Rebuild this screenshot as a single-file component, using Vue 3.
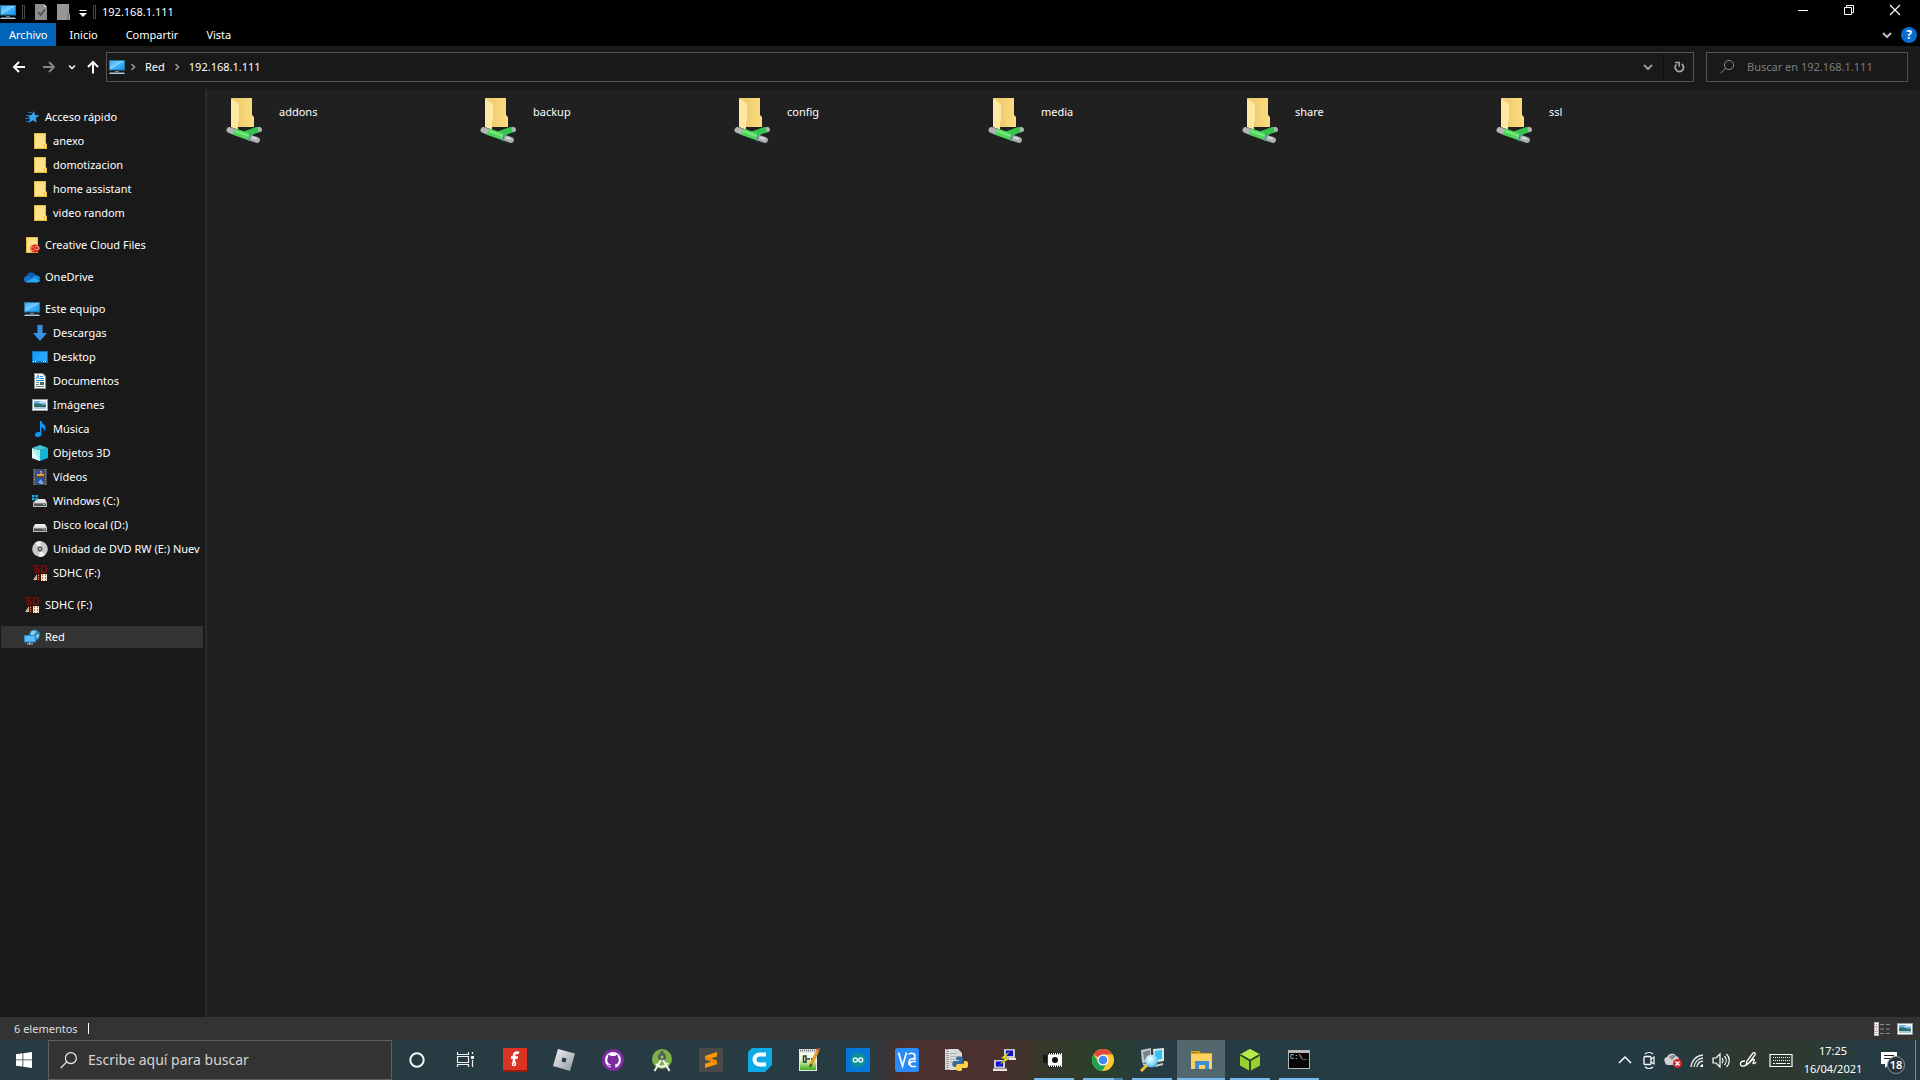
<template>
    <div class="desktop">
        <!-- icon sprite -->
        <svg class="sprite" aria-hidden="true">
            <defs>
                <linearGradient id="gScreen" x1="0" y1="0" x2="1" y2="1">
                    <stop offset="0" stop-color="#3ba7f0" /><stop offset=".5" stop-color="#7fd0ff" /><stop offset=".52" stop-color="#3fb2fb" /><stop offset="1" stop-color="#1a98ee" />
                </linearGradient>
                <linearGradient id="gFolder" x1="0" y1="0" x2="1" y2="0">
                    <stop offset="0" stop-color="#e9c766" /><stop offset="1" stop-color="#fedc83" />
                </linearGradient>
                <linearGradient id="gSilver" x1="0" y1="0" x2="1" y2="1">
                    <stop offset="0" stop-color="#f4f5f7" /><stop offset="1" stop-color="#8f979f" />
                </linearGradient>
                <linearGradient id="gGreen" x1="0" y1="0" x2="0" y2="1">
                    <stop offset="0" stop-color="#fdfff8" /><stop offset=".4" stop-color="#e6f8c4" /><stop offset="1" stop-color="#3fae18" />
                </linearGradient>
                <radialGradient id="gLens" cx=".4" cy=".35" r=".7">
                    <stop offset="0" stop-color="#f5ffff" /><stop offset=".6" stop-color="#8edcf8" /><stop offset="1" stop-color="#3d9fd6" />
                </radialGradient>
            </defs>
            <symbol id="i-pc" viewBox="0 0 16 16">
                <path d="M0 1h16v10.500H0z" fill="#28759e" /><path d="M1 2h14v8.500H1z" fill="url(#gScreen)" />
                <path d="M6 12h4v1H6z" fill="#6c7d88" /><path d="M1 13.500h14l1 1.500H0z" fill="#b5c6d2" />
            </symbol>
            <symbol id="i-star" viewBox="0 0 16 16">
                <path d="M10 2l.9 4 4.600.2-3.700 2.800.8 4.500-3.900-2.300-4.200 3 1.600-4.700L3.500 6.300l4-.3z" fill="#35a7f2" />
                <path d="M4 3.500h4M2 6.500h4M1 9.500h5M2 12.500h4" stroke="#1b72b8" />
            </symbol>
            <symbol id="i-dir" viewBox="0 0 16 16">
                <path d="M2 0h12v10l1 1v5H2z" fill="#e7bb3a" /><path d="M3 1h10v10h-1v4H3z" fill="#ffe18b" /><path d="M13 11h1v4h-1z" fill="#ffe9a8" />
            </symbol>
            <symbol id="i-cc" viewBox="0 0 16 16">
                <path d="M2 0h12v16H2z" fill="#e7bb3a" /><path d="M3 1h10v14H3z" fill="#ffe18b" />
                <ellipse cx="11" cy="11.500" rx="5" ry="4" fill="#da2312" />
                <path d="M10 13.500H8.500a1.800 1.800 0 0 1 0-3.600c1.500 0 2 1.600 3.500 3h1a1.800 1.800 0 0 0 0-3.700c-1 0-1.300.4-1.800.9" fill="none" stroke="#ffd1b5" stroke-width=".8" />
            </symbol>
            <symbol id="i-onedrive" viewBox="0 0 16 16">
                <path d="M2.500 8.200A5 5 0 0 1 12 6.300L9 9z" fill="#0b5cab" /><path d="M0 10.300a3.300 3.300 0 0 1 4.600-3.200L11 11l-8 2.500a3.200 3.200 0 0 1-3-3.200z" fill="#1173cc" />
                <path d="M8.500 8.500a4 4 0 0 1 4.500-2 3.600 3.600 0 0 1 3 3.700L10 11z" fill="#158ce0" /><path d="M2 13l7-4.200L16 11a2.800 2.800 0 0 1-2.700 2.500H3.400z" fill="#29aaf0" />
            </symbol>
            <symbol id="i-down" viewBox="0 0 16 16"><path d="M5.500 0h5v8H15l-7 8-7-8h4.500z" fill="#3592e5" /></symbol>
            <symbol id="i-desk" viewBox="0 0 16 16">
                <path d="M0 2h16v12H0z" fill="#0c73bf" /><path d="M1 3h14v9H1z" fill="#149dfb" /><path d="M9 3h6v9H2z" fill="#32adff" opacity=".6" />
                <path d="M1 12.500h1M3 12.500h1M11 12.500h1M13 12.500h1" stroke="#fff" />
            </symbol>
            <symbol id="i-doc" viewBox="0 0 16 16">
                <path d="M2 0h9l3 3v13H2z" fill="#8f8f8f" /><path d="M3 1h7.500L13 3.500V15H3z" fill="#fafafa" />
                <path d="M4 6l2-4 1 4M8 3.500h3M8 5.500h4M4 7.500h8" stroke="#1f86d6" fill="none" /><path d="M4 9.500h3M4 11.500h3M4 13.500h8" stroke="#6f7f8b" /><path d="M8 9h4v3H8z" fill="#35715c" />
            </symbol>
            <symbol id="i-img" viewBox="0 0 16 16">
                <path d="M0 2h16v12H0z" fill="#9c9c9c" /><path d="M1 3h14v10H1z" fill="#fff" /><path d="M2 4h12v8H2z" fill="#69b4ea" />
                <path d="M2 7c3-2 6 1 12 1v2H2z" fill="#2f6d5c" /><path d="M2 10h12v2H2z" fill="#9fc9de" /><path d="M7 6h7V4H9z" fill="#c9e3f5" />
            </symbol>
            <symbol id="i-music" viewBox="0 0 16 16"><path d="M8 0h1.500c.3 3 4 3.600 4 7 0 2-1 3-1.500 3.600.5-2.600-.6-3.600-2.500-4.300V13c0 1.800-1.500 3-3.600 3-1.700 0-2.900-.8-2.900-2.200 0-2 2.200-3.200 5-2.600z" fill="#0c9afa" /></symbol>
            <symbol id="i-3d" viewBox="0 0 16 16">
                <path d="M0 3l8 2v11l-8-3z" fill="#a8eef0" /><path d="M16 3L8 5v11l8-3z" fill="#13b5d6" /><path d="M8 0l8 3-8 2-8-2z" fill="#43c9d4" /><path d="M0 3l8 13-8-3z" fill="#dcfbf8" />
            </symbol>
            <symbol id="i-video" viewBox="0 0 16 16">
                <path d="M1 0h14v16H1z" fill="#4b4b4b" /><path d="M2.500 0v16M13.500 0v16" stroke="#a0a0a0" stroke-dasharray="1 1.500" />
                <path d="M4 1h8v6H4z" fill="#2a50a8" /><path d="M4 9h8v6H4z" fill="#2a50a8" /><path d="M5 5h3V2h2v3h2v2H5z" fill="#e4a02c" /><path d="M6 13l3-3 3 5H8z" fill="#65a9ed" /><path d="M8 3h1v1H8zM5 12h2v1H5z" fill="#c7332d" />
            </symbol>
            <symbol id="i-disk" viewBox="0 0 16 16">
                <path d="M3 7h10l2 4H1z" fill="#e9e9e9" /><path d="M1 10.500h14V15H1z" fill="#bcbcbc" /><path d="M2 11.500h12V14H2z" fill="#535353" /><path d="M11 12h2v1h-2z" fill="#48e04e" />
            </symbol>
            <symbol id="i-win" viewBox="0 0 16 16">
                <path d="M5 6h8l2 4H1z" fill="#e9e9e9" /><path d="M1 9.500h14V14H1z" fill="#bcbcbc" /><path d="M2 10.500h12V13H2z" fill="#535353" /><path d="M11 11h2v1h-2z" fill="#48e04e" />
                <path d="M0 2h2.500v2.300H0zM3.300 2H6v2.300H3.300zM0 5h2.500v2.300H0zM3.300 5H6v2.300H3.300z" fill="#18aef2" />
            </symbol>
            <symbol id="i-dvd" viewBox="0 0 16 16">
                <circle cx="8" cy="8" r="7.800" fill="#c9c9c9" /><path d="M8 8L3 2a8 8 0 0 1 6-2zM8 8l5 6a8 8 0 0 1-6 2z" fill="#f2f2f2" />
                <circle cx="8" cy="8" r="3" fill="#9b9b9b" /><circle cx="8" cy="8" r="2" fill="#3a3a3a" /><circle cx="8" cy="8" r=".9" fill="#eee" />
            </symbol>
            <symbol id="i-sd" viewBox="0 0 16 16">
                <path d="M1 15l4-6v6z" fill="#c6b8a2" /><path d="M5 9h3v7H5z" fill="#7d0507" /><path d="M6.500 10v5" stroke="#d6936a" stroke-dasharray="1 1" />
                <path d="M9 9h6v7H9z" fill="#f4ece0" /><path d="M10.500 9v7M13.500 9v7" stroke="#e3681b" stroke-dasharray="2 1" />
            </symbol>
            <symbol id="i-red" viewBox="0 0 16 16">
                <circle cx="10.500" cy="6" r="5.500" fill="#2f86b4" /><path d="M7 3c2-2 5-1 5 0s-2 1-2 3-2 1-3 0zM12 6c2-1 3 0 3 1l-2 3z" fill="#8fd2ec" />
                <path d="M0 6h12v7.500H0z" fill="#2d86bf" /><path d="M1 7h10v5.500H1z" fill="#58bdff" /><path d="M3 15h6M5.500 13v2" stroke="#a9c5d6" />
            </symbol>
            <symbol id="i-netfolder" viewBox="0 0 38 48">
                <path d="M6 1h20v17l2 2v10H6z" fill="url(#gFolder)" /><path d="M5 1l8 6v17l-1 1v8l-7-3z" fill="#ffe7a4" /><path d="M5 1h6l2 6z" fill="#f2d078" />
                <path d="M3.500 33l5 2" stroke="#b4b4b4" stroke-width="6" stroke-linecap="round" /><path d="M33.500 32.500l-2 .5" stroke="#b4b4b4" stroke-width="5" stroke-linecap="round" />
                <path d="M32 32.500l-14 5" stroke="#35c24d" stroke-width="6" /><path d="M8 34.500l17 6" stroke="#4dd45b" stroke-width="7" /><path d="M9 34l14 5" stroke="#79ea82" stroke-width="2" />
                <path d="M25 41l6 2" stroke="#a8acac" stroke-width="6" stroke-linecap="round" /><path d="M26 40.500l5 1.500" stroke="#d8dada" stroke-width="2" /><path d="M24.500 37l-2 7" stroke="#2ba07f" stroke-width="1.500" />
            </symbol>
            <symbol id="i-props" viewBox="0 0 16 16"><path d="M2 0h9l3 3v13H2z" fill="#8e8e8e" /><path d="M11 0v3h3z" fill="#c5c5c5" /><path d="M5 8l2.500 3L12 5.500" fill="none" stroke="#4a4a4a" stroke-width="1.500" /></symbol>
            <symbol id="i-newdir" viewBox="0 0 16 16"><path d="M1 0h12v9l1 1v6H1z" fill="#969696" /><path d="M12 9v7" stroke="#6d6d6d" /></symbol>
            <symbol id="i-more" viewBox="0 0 16 16"><path d="M4.500 6.500h7" stroke="#fff" /><path d="M4 9h8l-4 4z" fill="#fff" /></symbol>
            <symbol id="i-min" viewBox="0 0 16 16"><path d="M3 8.500h10" stroke="#fff" /></symbol>
            <symbol id="i-restore" viewBox="0 0 16 16"><path d="M3.500 5.500h7v7h-7zM5.500 5.500v-2h7v7h-2" fill="none" stroke="#fff" /></symbol>
            <symbol id="i-close" viewBox="0 0 16 16"><path d="M3 3l10 10M13 3L3 13" stroke="#fff" stroke-width="1.200" /></symbol>
            <symbol id="i-chev" viewBox="0 0 16 16"><path d="M4 6l4 4 4-4" fill="none" stroke="currentColor" stroke-width="2" /></symbol>
            <symbol id="i-chevr" viewBox="0 0 16 16"><path d="M6.500 5l3 3-3 3" fill="none" stroke="#9a9a9a" stroke-width="1.500" /></symbol>
            <symbol id="i-back" viewBox="0 0 16 16"><path d="M14 8H3M8 3L3 8l5 5" fill="none" stroke="currentColor" stroke-width="2" /></symbol>
            <symbol id="i-fwd" viewBox="0 0 16 16"><path d="M2 8h11M8 3l5 5-5 5" fill="none" stroke="currentColor" stroke-width="2" /></symbol>
            <symbol id="i-up" viewBox="0 0 16 16"><path d="M8 14.500V3M3 8l5-5 5 5" fill="none" stroke="currentColor" stroke-width="2" /></symbol>
            <symbol id="i-reload" viewBox="0 0 16 16"><path d="M5.500 5.300A4.200 4.200 0 1 0 10.800 5" fill="none" stroke="#a5a5a5" stroke-width="1.700" /><path d="M4 3.500h4.200v4.200" fill="none" stroke="#a5a5a5" stroke-width="1.500" /></symbol>
            <symbol id="i-search" viewBox="0 0 16 16"><circle cx="10" cy="6" r="4.600" fill="none" stroke="currentColor" /><path d="M6.600 9.200L1.500 14.300" stroke="currentColor" /></symbol>
            <symbol id="i-details" viewBox="0 0 16 16">
                <path d="M0 1h5v14H0z" fill="#b5b5b5" /><path d="M1 2h3v3H1zM1 6.500h3v3H1zM1 11h3v3H1z" fill="#fff" /><path d="M2 3h1v1H2zM2 7.500h1v1H2zM2 12h1v1H2z" fill="#b3393b" />
                <path d="M6 3.500h4M12 3.500h4M6 8h4M12 8h4M6 12.500h4M12 12.500h4" stroke="#8d8d8d" />
            </symbol>
            <symbol id="i-start" viewBox="0 0 16 16"><path d="M0 2.200l6.500-.9v6.200H0zM7.300 1.200L16 0v7.500H7.300zM0 8.300h6.500v6.300L0 13.700zM7.300 8.300H16V16l-8.700-1.200z" fill="#fff" /></symbol>
            <!-- taskbar apps -->
            <symbol id="a-cortana" viewBox="0 0 24 24"><circle cx="12" cy="12" r="6.700" fill="none" stroke="#f4f4f4" stroke-width="2" /></symbol>
            <symbol id="a-tasks" viewBox="0 0 24 24"><path d="M3.500 4v2.500h11V4M3.500 19v-2.500h11V19M3.500 8.500h11v6h-11zM18.500 4v2M18.500 12v7" fill="none" stroke="#f4f4f4" stroke-width="1.200" /><path d="M17 8h3v3h-3z" fill="#f4f4f4" /></symbol>
            <symbol id="a-fritzing" viewBox="0 0 24 24"><path d="M0 0h24v24H0z" fill="#d93324" /><path d="M0 22h24v2H0z" fill="#951d12" /><path d="M16 5c-3-1-5 0-5 3v7M8 9.500h7" fill="none" stroke="#fff" stroke-width="2.600" /><circle cx="11" cy="16" r="1.600" fill="#d93324" stroke="#fff" stroke-width="1.500" /></symbol>
            <symbol id="a-roblox" viewBox="0 0 24 24"><path d="M6 1l17 4.500L18 23 1 18z" fill="url(#gSilver)" /><path d="M10.500 9.500l4 1-1 4-4-1z" fill="#263c42" /></symbol>
            <symbol id="a-github" viewBox="0 0 24 24"><circle cx="12" cy="12" r="11" fill="#7b2aa0" /><circle cx="12" cy="12" r="8" fill="#f7f4fa" /><path d="M7.500 6.500l2.500 1.400h4l2.500-1.400.5 2.700c2 4-.2 6.800-3.200 7.200.6.800.5 1.600.5 4H9.700v-2.200c-2 .3-2.500-.7-3.300-1.600 1 .2 1.700.8 3.300.5l.5-.7c-3-.4-5-3.200-3.200-7.200z" fill="#7b2aa0" /></symbol>
            <symbol id="a-android" viewBox="0 0 24 24">
                <circle cx="12" cy="11" r="10" fill="#7eb344" /><circle cx="12" cy="9" r="4" fill="#50605a" /><circle cx="12" cy="9" r="1.500" fill="#9bc66b" />
                <path d="M11 12L4.500 23M13 12l6.500 11M6 16c4 4 8 3.500 12-1" fill="none" stroke="#f3f5f3" stroke-width="2" /><path d="M12 3v4" stroke="#50605a" stroke-width="3" />
            </symbol>
            <symbol id="a-sublime" viewBox="0 0 24 24"><rect width="24" height="24" rx="1.500" fill="#4a4a4a" /><path d="M6 8l12-4v4.500l-6 2 6 2v3.700L6 20v-4.300l6.500-2.200L6 11.500z" fill="#ff9800" /><path d="M6 11.500V8l12 4.500v3.700z" fill="#e07e00" opacity=".5" /></symbol>
            <symbol id="a-cura" viewBox="0 0 24 24"><path d="M4 0h20v17l-7 7H0V4z" fill="#0fa9e6" /><path d="M18 6.500h-6.500a5 5 0 0 0 0 10H18" fill="none" stroke="#fff" stroke-width="4" /></symbol>
            <symbol id="a-npp" viewBox="0 0 24 24">
                <path d="M2 1h18v22H2z" fill="#e8e8e8" /><path d="M3 5h16v17H3z" fill="url(#gGreen)" /><path d="M3 2.500h16" stroke="#777" stroke-width="2" stroke-dasharray="1 1" />
                <path d="M6.500 8v6H9V8zM10 11h3M14 11h3" fill="none" stroke="#333" stroke-width="1.500" /><path d="M21 2l-7 15" stroke="#e39b28" stroke-width="3" /><path d="M14.500 16l-1.500 3" stroke="#5b4425" stroke-width="2" /><path d="M22 0l-1 3" stroke="#bd4c40" stroke-width="3" />
            </symbol>
            <symbol id="a-arduino" viewBox="0 0 24 24"><path d="M0 0h24v24H0z" fill="#0478d7" /><circle cx="12" cy="12" r="7.500" fill="#0d9096" /><circle cx="9.300" cy="12" r="2" fill="none" stroke="#e4f6f6" stroke-width="1.400" /><circle cx="14.700" cy="12" r="2" fill="none" stroke="#e4f6f6" stroke-width="1.400" /></symbol>
            <symbol id="a-vnc" viewBox="0 0 24 24"><rect width="24" height="24" rx="2.500" fill="#2a8af6" /><path d="M3.500 4.500l4 13.500 4-13.500" fill="none" stroke="#fff" stroke-width="1.700" /><path d="M13.500 6.500c1-2 6.500-2 6.500 1.500 0 2-1.500 3-4 3h5M21 13.500h-3.500a2.500 2.500 0 0 0 0 5H21M16 11c-2 1-2.500 3-2 6" fill="none" stroke="#fff" stroke-width="1.500" /></symbol>
            <symbol id="a-python" viewBox="0 0 24 24">
                <path d="M1 1h13l4 4v17H1z" fill="#d9d9d9" /><path d="M3.500 1v21" stroke="#8a8a8a" stroke-width="2" stroke-dasharray="1 1" /><path d="M6 5.500h7M6 8.500h9M6 11.500h5M6 14.500h3" stroke="#b4b4b4" />
                <path d="M12 10c0-2 7-2 7 0v4c0 2-1 2-3 2h-3v3h-2c-4 0-3-6-1-6h5v-1h-3z" fill="#356c9c" /><path d="M18 22c-1 2-6 1-6-1v-3c0-1 1-2 3-2h3c2 0 2-1 2-3h2c3 0 3 7 0 7h-4z" fill="#ffd047" />
            </symbol>
            <symbol id="a-putty" viewBox="0 0 24 24">
                <path d="M11 1h11v9H11z" fill="#c9c9c9" /><path d="M13 2.500h7v5.500h-7z" fill="#1010d0" /><path d="M11 10h12v2H11z" fill="#e6e6e6" />
                <path d="M1 12h11v8H1z" fill="#c9c9c9" /><path d="M3 13.500h7v5H3z" fill="#1010d0" /><path d="M0 20.500h14V23H0z" fill="#e6e6e6" /><path d="M17 3L8 10l4 1-6 6 10-6-4-1z" fill="#f4f013" stroke="#5a5700" stroke-width=".4" />
            </symbol>
            <symbol id="a-cam" viewBox="0 0 24 24"><path d="M1 7h4v8H1z" fill="#151515" /><path d="M6 5h14v14H6z" fill="#fafafa" /><path d="M6 5.500h14M6 18.500h14" stroke="#111" stroke-width="2" stroke-dasharray="1 1" /><circle cx="13" cy="12" r="3" fill="#111" /></symbol>
            <symbol id="a-chrome" viewBox="0 0 24 24">
                <circle cx="12" cy="12" r="11" fill="#fcc934" /><path d="M12 12L2.500 6.500A11 11 0 0 1 21.500 6.500H12z" fill="#e04a3c" /><path d="M2.500 6.500A11 11 0 0 0 11 23l5.500-8.500H8z" fill="#1fa157" />
                <circle cx="12" cy="12" r="5.500" fill="#fff" /><circle cx="12" cy="12" r="4.300" fill="#4285f4" />
            </symbol>
            <symbol id="a-net" viewBox="0 0 24 24">
                <path d="M1 2l10-2v13l-9 2z" fill="#c4c8cc" /><path d="M3 4l7-2v9l-6 1z" fill="#7c848a" /><path d="M13 1l11-1v13l-10 2z" fill="#d5e3ea" /><path d="M15 3l7-1v9l-7 1z" fill="#32c1f2" /><path d="M3 16l6 2M15 18l8-2" stroke="#c9c9c9" stroke-width="2" />
                <path d="M7 17l-6 6" stroke="#f0bd39" stroke-width="3" /><circle cx="11.500" cy="13" r="6.500" fill="url(#gLens)" />
            </symbol>
            <symbol id="a-explorer" viewBox="0 0 24 24"><path d="M2 3h8l2 2h11v15H2z" fill="#e0a526" /><path d="M2 6h21v15H2z" fill="#fdd164" /><path d="M6 13h14v8h-4v-4h-6v4H6z" fill="#3a8fd5" /><path d="M3 4.500h6" stroke="#b27a10" /></symbol>
            <symbol id="a-box" viewBox="0 0 24 24"><path d="M12 1l10 5.500v11L12 23 2 17.500v-11z" fill="#96d22f" /><path d="M12 1l10 5.500-10 5.500-10-5.500z" fill="#b5ea4d" /><path d="M2.500 7L12 12.500 21.500 7M12 12.500V23" fill="none" stroke="#263d22" stroke-width="1.800" /></symbol>
            <symbol id="a-cmd" viewBox="0 0 24 24"><path d="M1 2h22v19H1z" fill="#b7b7b7" /><path d="M2 5h20v15H2z" fill="#050505" /></symbol>
            <!-- tray -->
            <symbol id="t-up" viewBox="0 0 24 24"><path d="M6 15l6-6 6 6" fill="none" stroke="#fff" stroke-width="1.500" /></symbol>
            <symbol id="t-meet" viewBox="0 0 24 24"><rect x="7" y="8.500" width="7" height="8" rx="1" fill="none" stroke="#fff" stroke-width="1.300" /><path d="M14 11l3-2v7l-3-2M8 6c2-2 6-2 8 0M8 19c2 2 6 2 8 0" fill="none" stroke="#fff" stroke-width="1.200" /></symbol>
            <symbol id="t-cloud" viewBox="0 0 24 24"><path d="M4 14a3 3 0 0 1 2-5 5 5 0 0 1 9-1 4 4 0 0 1 3 4v2c0 2-2 3-4 3H7c-2 0-3-1-3-3z" fill="#d2d2d2" /><path d="M8 9a5 5 0 0 1 7-1l-4 4z" fill="#8b8b8b" /><circle cx="16.500" cy="15.500" r="4.500" fill="#d8262e" /><path d="M14.500 13.500l4 4M18.500 13.500l-4 4" stroke="#fff" stroke-width="1.300" /></symbol>
            <symbol id="t-wifi" viewBox="0 0 24 24"><path d="M6 19A13 13 0 0 1 18 7M9 19a10 10 0 0 1 9-9M12 19a7 7 0 0 1 6-6" fill="none" stroke="#eef1f1" stroke-width="1.300" /><path d="M18 19h-3a3.500 3.500 0 0 1 3-3z" fill="#fff" /></symbol>
            <symbol id="t-vol" viewBox="0 0 24 24"><path d="M4 10h3l4-4v13l-4-4H4z" fill="none" stroke="#fff" stroke-width="1.200" /><path d="M13 10a4 4 0 0 1 0 5M15.500 8a7 7 0 0 1 0 9M17.500 6a9 9 0 0 1 0 13" fill="none" stroke="#fff" stroke-width="1.200" /></symbol>
            <symbol id="t-pen" viewBox="0 0 24 24"><path d="M9 17l1-4 6-8c1-1 3 0 2 2l-6 8zM8 13c-6 0-6 6-1 5 4-1 5-3 8-6 1-1 3-1 2 1l-1 2c0 1 2 1 3-1" fill="none" stroke="#fff" stroke-width="1.300" /></symbol>
            <symbol id="t-keys" viewBox="0 0 24 24"><path d="M1 6.500h22v12H1z" fill="none" stroke="#fff" stroke-width="1.200" /><path d="M4 9.500h17M4 12.500h17" stroke="#fff" stroke-dasharray="1 1" /><path d="M4 15.500h2M7 15.500h10M18 15.500h3" stroke="#fff" /></symbol>
            <symbol id="t-note" viewBox="0 0 24 24"><path d="M4 4h16v12h-8l-4 4v-4H4z" fill="#fff" /><path d="M7 7.500h10M7 10.500h10" stroke="#222" /></symbol>
        </svg>

        <header>
            <div class="titlebar">
                <svg class="ic"><use href="#i-pc" /></svg>
                <i class="sep"></i>
                <button class="quick" aria-label="Propiedades"><svg class="ic"><use href="#i-props" /></svg></button>
                <button class="quick" aria-label="Nueva carpeta"><svg class="ic"><use href="#i-newdir" /></svg></button>
                <button class="more" aria-label="Personalizar"><svg class="ic"><use href="#i-more" /></svg></button>
                <i class="sep last"></i>
                <span class="title">{{ host }}</span>
                <div class="winbtns">
                    <button aria-label="Minimizar"><svg class="ic"><use href="#i-min" /></svg></button>
                    <button aria-label="Restaurar"><svg class="ic"><use href="#i-restore" /></svg></button>
                    <button aria-label="Cerrar"><svg class="ic"><use href="#i-close" /></svg></button>
                </div>
            </div>
            <nav class="tabs">
                <button v-for="tab in tabs" :key="tab" :class="{ active: tab === curTab }" @click="curTab = tab">{{ tab }}</button>
                <div class="ribbon">
                    <button aria-label="Expandir"><svg class="ic"><use href="#i-chev" /></svg></button>
                    <button class="help" aria-label="Ayuda">?</button>
                </div>
            </nav>
            <div class="address">
                <div class="history">
                    <button class="arrow" aria-label="Atrás"><svg class="ic"><use href="#i-back" /></svg></button>
                    <button class="arrow off" aria-label="Adelante"><svg class="ic"><use href="#i-fwd" /></svg></button>
                    <button class="small" aria-label="Recientes"><svg><use href="#i-chev" /></svg></button>
                    <button class="top" aria-label="Subir"><svg class="ic"><use href="#i-up" /></svg></button>
                </div>
                <div class="path">
                    <svg class="ic"><use href="#i-pc" /></svg>
                    <template v-for="part in parts" :key="part">
                        <svg class="ic"><use href="#i-chevr" /></svg>
                        <button>{{ part }}</button>
                    </template>
                    <button class="drop" aria-label="Ubicaciones anteriores"><svg class="ic"><use href="#i-chev" /></svg></button>
                    <button class="reload" aria-label="Actualizar"><svg class="ic"><use href="#i-reload" /></svg></button>
                </div>
                <label class="find">
                    <svg class="ic"><use href="#i-search" /></svg>
                    <input v-model="query" type="text" :placeholder="'Buscar en ' + host" aria-label="Buscar">
                </label>
            </div>
        </header>

        <main>
            <aside>
                <ul v-for="(group, i) in groups" :key="i">
                    <li v-for="(item, j) in group" :key="item.name">
                        <a href="#" :class="{ sub: j > 0, selected: item.name === place }" @click.prevent="place = item.name">
                            <svg class="ic">
                                <use :href="'#i-' + item.icon" />
                                <text v-if="item.icon === 'sd'" class="sd" x="1" y="8">SD</text>
                            </svg>
                            <span>{{ item.name }}</span>
                        </a>
                    </li>
                </ul>
            </aside>
            <section class="files">
                <a v-for="name in folders" :key="name" href="#" class="folder" @click.prevent>
                    <svg><use href="#i-netfolder" /></svg>
                    <span>{{ name }}</span>
                </a>
            </section>
        </main>

        <footer class="status">
            <span>{{ folders.length }} elementos</span>
            <i></i>
            <div class="views">
                <button aria-label="Detalles"><svg class="ic"><use href="#i-details" /></svg></button>
                <button aria-label="Iconos grandes"><svg class="ic"><use href="#i-img" /></svg></button>
            </div>
        </footer>

        <div class="taskbar">
            <button class="start" aria-label="Inicio"><svg class="ic"><use href="#i-start" /></svg></button>
            <label class="search">
                <svg><use href="#i-search" /></svg>
                <input v-model="search" type="text" placeholder="Escribe aquí para buscar" aria-label="Buscar en Windows">
            </label>
            <div class="apps">
                <button v-for="app in apps" :key="app.icon" :class="app.state" :aria-label="app.icon">
                    <svg>
                        <use :href="'#a-' + app.icon" />
                        <text v-if="app.icon === 'cmd'" class="prompt" x="3" y="11">C:\_</text>
                    </svg>
                </button>
            </div>
            <div class="tray">
                <button v-for="t in tray" :key="t" :class="t" :aria-label="t"><svg><use :href="'#t-' + t" /></svg></button>
                <div class="clock"><span>17:25</span><span>16/04/2021</span></div>
                <button class="note" aria-label="Notificaciones"><svg><use href="#t-note" /></svg><b>18</b></button>
                <i class="peek"></i>
            </div>
        </div>
    </div>
</template>

<script setup>
import { ref } from 'vue';
const host = '192.168.1.111'
const tabs = ['Archivo', 'Inicio', 'Compartir', 'Vista']
const parts = ['Red', host]
let curTab = ref('Archivo');
let place = ref('Red');
let query = ref('');
let search = ref('');
// first item of each group is the parent node
const groups = [
    [
        { name: 'Acceso rápido', icon: 'star' }, { name: 'anexo', icon: 'dir' }, { name: 'domotizacion', icon: 'dir' },
        { name: 'home assistant', icon: 'dir' }, { name: 'video random', icon: 'dir' }
    ],
    [{ name: 'Creative Cloud Files', icon: 'cc' }],
    [{ name: 'OneDrive', icon: 'onedrive' }],
    [
        { name: 'Este equipo', icon: 'pc' }, { name: 'Descargas', icon: 'down' }, { name: 'Desktop', icon: 'desk' },
        { name: 'Documentos', icon: 'doc' }, { name: 'Imágenes', icon: 'img' }, { name: 'Música', icon: 'music' },
        { name: 'Objetos 3D', icon: '3d' }, { name: 'Vídeos', icon: 'video' }, { name: 'Windows (C:)', icon: 'win' },
        { name: 'Disco local (D:)', icon: 'disk' }, { name: 'Unidad de DVD RW (E:) Nuev', icon: 'dvd' }, { name: 'SDHC (F:)', icon: 'sd' }
    ],
    [{ name: 'SDHC (F:)', icon: 'sd' }],
    [{ name: 'Red', icon: 'red' }]
]
const folders = ['addons', 'backup', 'config', 'media', 'share', 'ssl']
const apps = [
    { icon: 'cortana' }, { icon: 'tasks' }, { icon: 'fritzing' }, { icon: 'roblox' }, { icon: 'github' }, { icon: 'android' },
    { icon: 'sublime' }, { icon: 'cura' }, { icon: 'npp' }, { icon: 'arduino' }, { icon: 'vnc' }, { icon: 'python' }, { icon: 'putty' },
    { icon: 'cam', state: 'open' }, { icon: 'chrome', state: 'open many' }, { icon: 'net', state: 'open' },
    { icon: 'explorer', state: 'current' }, { icon: 'box', state: 'open' }, { icon: 'cmd', state: 'open' }
]
const tray = ['up', 'meet', 'cloud', 'wifi', 'vol', 'pen', 'keys']
</script>

<style>
body {
    margin: 0;
    background: #202020;
}
</style>

<style scoped>
.desktop {
    display: flex;
    flex-direction: column;
    min-height: 100vh;
    background: #202020;
    color: #fff;
    font-family: "Noto Sans", "Open Sans", sans-serif;
    font-size: 11px;
    line-height: 16px;
}

.sprite {
    position: absolute;
    width: 0;
    height: 0;
}

button,
input {
    padding: 0;
    border: none;
    background: none;
    color: inherit;
    font: inherit;
}

button {
    display: flex;
    align-items: center;
    justify-content: center;
}

a {
    color: inherit;
    text-decoration: none;
}

svg {
    flex: none;
    display: block;
}

.ic {
    width: 16px;
    height: 16px;
}

.titlebar {
    display: flex;
    align-items: center;
    height: 23px;
    background: #000;
}

.sep {
    width: 1px;
    height: 12px;
    margin: 0 4px 0 6px;
    border: 1px solid #484848;
}

.sep.last {
    margin: 0 6px 0 2px;
}

.quick {
    width: 23px;
}

.more {
    width: 16px;
}

.winbtns {
    display: flex;
    align-self: flex-start;
    margin-left: auto;
    padding-right: 2px;
}

.winbtns button {
    width: 46px;
    height: 20px;
}

.tabs {
    display: flex;
    height: 23px;
    background: #000;
}

.tabs>button {
    padding: 0 14px;
}

.tabs>.active {
    padding: 0 8px 0 9px;
    background: #0064b8;
}

.ribbon {
    display: flex;
    align-items: center;
    gap: 6px;
    margin-left: auto;
    padding-right: 3px;
    color: #bbb;
}

.help {
    width: 16px;
    height: 16px;
    border-radius: 50%;
    background: #0a6cd0;
    color: #fff;
    font-size: 12px;
    font-weight: 700;
}

.address {
    display: flex;
    align-items: center;
    height: 42px;
    padding-right: 12px;
    background: #191919;
    border-bottom: 1px solid #191919;
}

.history {
    display: flex;
    align-items: center;
    width: 106px;
    padding-left: 4px;
    box-sizing: border-box;
}

.arrow {
    width: 30px;
}

.off {
    color: #858585;
}

.small {
    width: 16px;
}

.small svg {
    width: 12px;
    height: 12px;
}

.top {
    width: 26px;
}

.path,
.find {
    display: flex;
    align-items: center;
    height: 30px;
    border: 1px solid #535353;
    box-sizing: border-box;
}

.path {
    flex: 1;
    padding-left: 2px;
}

.path button {
    padding: 0 4px;
}

.path .drop {
    margin-left: auto;
    width: 30px;
    color: #999;
}

.path .reload {
    width: 30px;
    height: 28px;
    border-left: 1px solid #111;
}

.find {
    width: 202px;
    margin-left: 12px;
    padding-left: 12px;
    gap: 12px;
    color: #8a8a8a;
}

.find input,
.search input {
    flex: 1;
    min-width: 0;
    outline: none;
}

.find input::placeholder {
    color: #7d7d7d;
}

main {
    flex: 1;
    display: flex;
}

aside {
    width: 205px;
    padding-top: 16px;
    background: #191919;
    border-right: 2px solid #2b2b2b;
    overflow: hidden;
}

ul {
    list-style: none;
    margin: 0 0 8px;
    padding: 0;
}

li {
    display: flex;
    align-items: center;
    height: 24px;
}

li a {
    display: flex;
    align-items: center;
    gap: 5px;
    flex: 1;
    height: 22px;
    margin: 0 2px 0 1px;
    padding-left: 23px;
    white-space: nowrap;
}

li .sub {
    padding-left: 31px;
}

li .selected {
    background: #333;
}

.sd {
    fill: #8a0507;
    font-family: "Liberation Sans", sans-serif;
    font-size: 10px;
    font-weight: 700;
}

.files {
    flex: 1;
    display: grid;
    grid-template-columns: repeat(auto-fill, 254px);
    align-content: start;
    padding: 8px 0 0 19px;
}

.folder {
    display: flex;
    gap: 15px;
}

.folder svg {
    width: 38px;
    height: 48px;
}

.folder span {
    padding-top: 7px;
}

.status {
    display: flex;
    align-items: center;
    height: 23px;
    padding: 0 7px 0 14px;
    background: #333;
    color: #dedede;
}

.status>i {
    width: 1px;
    height: 11px;
    margin-left: 10px;
    background: #fff;
}

.views {
    display: flex;
    gap: 7px;
    margin-left: auto;
}

.taskbar {
    display: flex;
    height: 40px;
    background: linear-gradient(90deg, #263c42 0%, #263c42 45%, #4a302f 47%, #4b302e 52%, #39362a 54%, #2b4029 57%, #263c42 60%, #243b43 86%, #2f382e 91%, #2d3a30 94%, #263c42 97%);
}

.start {
    width: 48px;
}

.search {
    display: flex;
    align-items: center;
    gap: 10px;
    width: 344px;
    padding-left: 10px;
    box-sizing: border-box;
    border: 1px solid #606060;
    background: #333;
    font-size: 14px;
    line-height: 20px;
    color: #eee;
}

.search svg {
    width: 19px;
    height: 19px;
}

.search input::placeholder {
    color: #d5d5d5;
}

.apps {
    display: flex;
    gap: 1px;
    padding-left: 1px;
}

.apps button {
    width: 48px;
    background-repeat: no-repeat;
    background-position: center bottom;
    background-size: 40px 2px;
}

.apps svg,
.tray svg {
    width: 24px;
    height: 24px;
}

.apps .open {
    background-image: linear-gradient(#76b9ed, #76b9ed);
}

.apps .many {
    background-image: linear-gradient(90deg, #76b9ed 78%, #4a80aa 78%);
}

.apps .current {
    background-color: #52686d;
    background-image: linear-gradient(#76b9ed, #76b9ed);
    background-size: 48px 2px;
}

.prompt {
    fill: #eee;
    font-family: "Liberation Mono", monospace;
    font-size: 7px;
}

.tray {
    display: flex;
    align-items: center;
    margin-left: auto;
    padding-right: 4px;
}

.tray .pen,
.tray .keys {
    width: 32px;
}

.clock {
    display: flex;
    flex-direction: column;
    width: 72px;
    line-height: 18px;
    text-align: center;
}

.note {
    position: relative;
    width: 40px;
}

.note b {
    position: absolute;
    left: 18px;
    top: 8px;
    width: 16px;
    height: 16px;
    border: 1px solid #8d9596;
    border-radius: 50%;
    background: #2a3437;
    font-weight: 600;
}

.peek {
    width: 1px;
    height: 40px;
    margin-left: 6px;
    background: #7d898b;
}
</style>
